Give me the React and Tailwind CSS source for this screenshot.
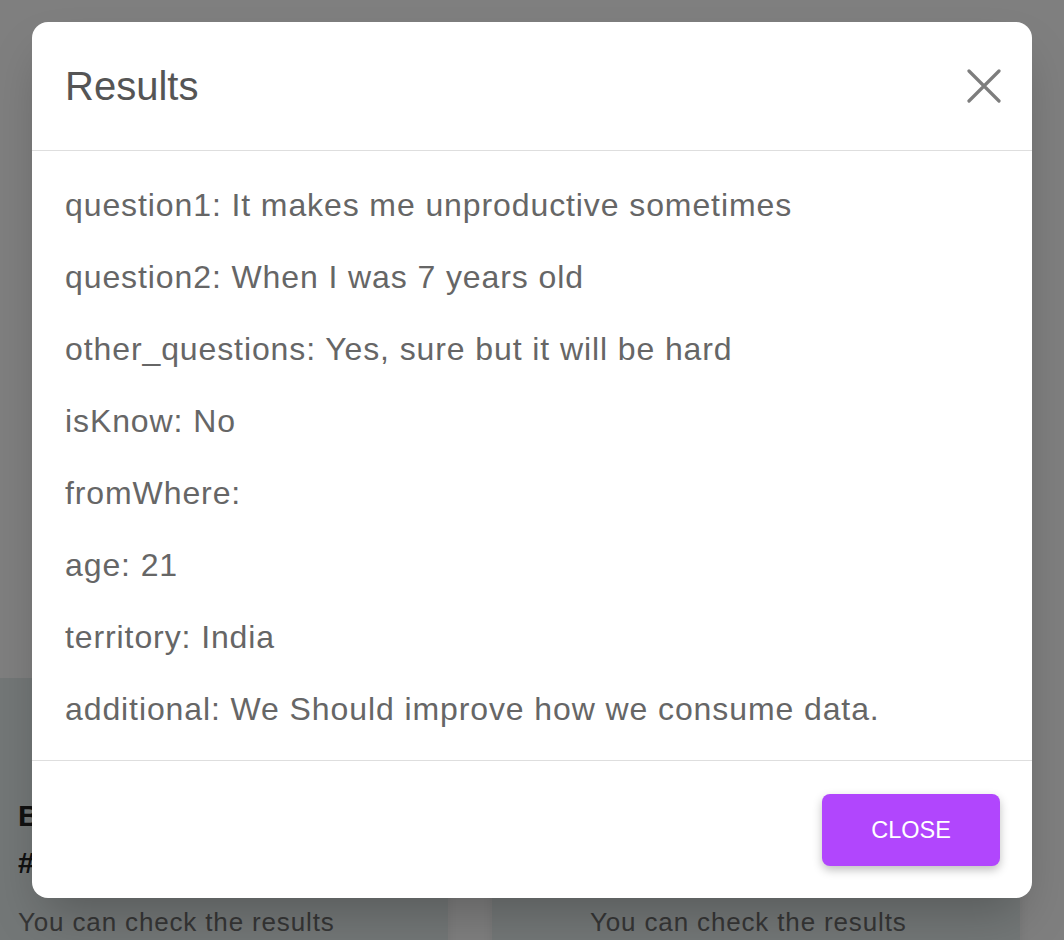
export default function App() {
  const rows = [
    "question1: It makes me unproductive sometimes",
    "question2: When I was 7 years old",
    "other_questions: Yes, sure but it will be hard",
    "isKnow: No",
    "fromWhere:",
    "age: 21",
    "territory: India",
    "additional: We Should improve how we consume data.",
  ];
  return (
    <div className="relative h-[940px] w-[1064px] overflow-hidden bg-white" style={{ fontFamily: '"Liberation Sans", Arial, sans-serif' }}>
      <div className="h-[678px]" />
      <div className="flex gap-[44px]">
        <div className="h-[300px] w-[448px] bg-[#e6eeee] px-[18px] pt-[114px] shadow-lg">
          <div className="text-[30px] font-bold leading-[47px] text-[#222]">Burnout Survey</div>
          <div className="text-[30px] font-bold leading-[47px] text-[#222]">#1</div>
          <div className="mt-[16px] text-[26px] leading-[40px] tracking-[0.85px] text-[#6c6c6c]">You can check the results</div>
        </div>
        <div className="h-[300px] w-[528px] bg-[#e6eeee] px-[98px] pt-[114px] shadow-lg">
          <div className="text-[30px] font-bold leading-[47px] text-[#222]">Anxiety Survey</div>
          <div className="text-[30px] font-bold leading-[47px] text-[#222]">#2</div>
          <div className="mt-[16px] text-[26px] leading-[40px] tracking-[0.85px] text-[#6c6c6c]">You can check the results</div>
        </div>
      </div>

      <div className="absolute inset-0 bg-black/50" />

      <div className="absolute left-[32px] top-[22px] w-[1000px] rounded-[16px] bg-white shadow-2xl">
        <div className="flex h-[129px] items-center justify-between border-b border-[#dedede] pl-[33px] pr-[32px]">
          <div className="text-[40px] leading-none text-[#555]">Results</div>
          <svg width="34" height="34" viewBox="0 0 34 34" className="mr-[-1px]">
            <path d="M2 2 L32 32 M32 2 L2 32" stroke="#7d7d7d" strokeWidth="3.2" strokeLinecap="round" />
          </svg>
        </div>
        <div className="flex flex-col gap-[27px] border-b border-[#dedede] pb-[28px] pl-[33px] pt-[32px]">
          {rows.map((r) => (
            <div key={r} className="text-[32px] leading-[45px] tracking-[0.9px] text-[#666]">{r}</div>
          ))}
        </div>
        <div className="flex h-[137px] items-center justify-end pr-[32px]">
          <button className="flex h-[72px] w-[178px] items-center justify-center rounded-[8px] bg-[#b146fd] pt-[3px] text-[23.5px] uppercase text-white shadow-[0_4px_10px_rgba(0,0,0,0.25)]">
            Close
          </button>
        </div>
      </div>
    </div>
  );
}
